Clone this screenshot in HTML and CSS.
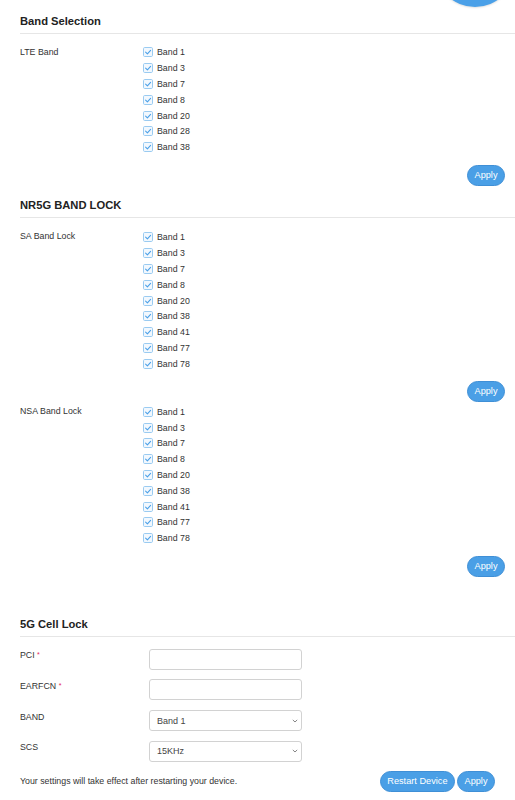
FILE: index.html
```html
<!DOCTYPE html>
<html lang="en">
<head>
<meta charset="utf-8">
<title>Band Selection</title>
<link rel="stylesheet" href="styles.css">
</head>
<body>
<div class="fab"></div>
<main class="page">
  <section class="sec sec-lte">
    <h2 class="title">Band Selection</h2>
    <div class="group g-lte">
      <div class="glabel">LTE Band</div>
      <ul class="bands">
        <li><span class="cb"><svg viewBox="0 0 10 10"><rect x="0.5" y="0.5" width="9" height="9" rx="1.2"/><path d="M2.6 5.2 L4.4 6.9 L7.6 3.4"/></svg></span>Band 1</li>
        <li><span class="cb"><svg viewBox="0 0 10 10"><rect x="0.5" y="0.5" width="9" height="9" rx="1.2"/><path d="M2.6 5.2 L4.4 6.9 L7.6 3.4"/></svg></span>Band 3</li>
        <li><span class="cb"><svg viewBox="0 0 10 10"><rect x="0.5" y="0.5" width="9" height="9" rx="1.2"/><path d="M2.6 5.2 L4.4 6.9 L7.6 3.4"/></svg></span>Band 7</li>
        <li><span class="cb"><svg viewBox="0 0 10 10"><rect x="0.5" y="0.5" width="9" height="9" rx="1.2"/><path d="M2.6 5.2 L4.4 6.9 L7.6 3.4"/></svg></span>Band 8</li>
        <li><span class="cb"><svg viewBox="0 0 10 10"><rect x="0.5" y="0.5" width="9" height="9" rx="1.2"/><path d="M2.6 5.2 L4.4 6.9 L7.6 3.4"/></svg></span>Band 20</li>
        <li><span class="cb"><svg viewBox="0 0 10 10"><rect x="0.5" y="0.5" width="9" height="9" rx="1.2"/><path d="M2.6 5.2 L4.4 6.9 L7.6 3.4"/></svg></span>Band 28</li>
        <li><span class="cb"><svg viewBox="0 0 10 10"><rect x="0.5" y="0.5" width="9" height="9" rx="1.2"/><path d="M2.6 5.2 L4.4 6.9 L7.6 3.4"/></svg></span>Band 38</li>
      </ul>
    </div>
    <div class="actions a1"><button class="btn">Apply</button></div>
  </section>

  <section class="sec sec-nr">
    <h2 class="title">NR5G BAND LOCK</h2>
    <div class="group g-sa">
      <div class="glabel">SA Band Lock</div>
      <ul class="bands">
        <li><span class="cb"><svg viewBox="0 0 10 10"><rect x="0.5" y="0.5" width="9" height="9" rx="1.2"/><path d="M2.6 5.2 L4.4 6.9 L7.6 3.4"/></svg></span>Band 1</li>
        <li><span class="cb"><svg viewBox="0 0 10 10"><rect x="0.5" y="0.5" width="9" height="9" rx="1.2"/><path d="M2.6 5.2 L4.4 6.9 L7.6 3.4"/></svg></span>Band 3</li>
        <li><span class="cb"><svg viewBox="0 0 10 10"><rect x="0.5" y="0.5" width="9" height="9" rx="1.2"/><path d="M2.6 5.2 L4.4 6.9 L7.6 3.4"/></svg></span>Band 7</li>
        <li><span class="cb"><svg viewBox="0 0 10 10"><rect x="0.5" y="0.5" width="9" height="9" rx="1.2"/><path d="M2.6 5.2 L4.4 6.9 L7.6 3.4"/></svg></span>Band 8</li>
        <li><span class="cb"><svg viewBox="0 0 10 10"><rect x="0.5" y="0.5" width="9" height="9" rx="1.2"/><path d="M2.6 5.2 L4.4 6.9 L7.6 3.4"/></svg></span>Band 20</li>
        <li><span class="cb"><svg viewBox="0 0 10 10"><rect x="0.5" y="0.5" width="9" height="9" rx="1.2"/><path d="M2.6 5.2 L4.4 6.9 L7.6 3.4"/></svg></span>Band 38</li>
        <li><span class="cb"><svg viewBox="0 0 10 10"><rect x="0.5" y="0.5" width="9" height="9" rx="1.2"/><path d="M2.6 5.2 L4.4 6.9 L7.6 3.4"/></svg></span>Band 41</li>
        <li><span class="cb"><svg viewBox="0 0 10 10"><rect x="0.5" y="0.5" width="9" height="9" rx="1.2"/><path d="M2.6 5.2 L4.4 6.9 L7.6 3.4"/></svg></span>Band 77</li>
        <li><span class="cb"><svg viewBox="0 0 10 10"><rect x="0.5" y="0.5" width="9" height="9" rx="1.2"/><path d="M2.6 5.2 L4.4 6.9 L7.6 3.4"/></svg></span>Band 78</li>
      </ul>
    </div>
    <div class="actions a2"><button class="btn">Apply</button></div>
    <div class="group g-nsa">
      <div class="glabel">NSA Band Lock</div>
      <ul class="bands">
        <li><span class="cb"><svg viewBox="0 0 10 10"><rect x="0.5" y="0.5" width="9" height="9" rx="1.2"/><path d="M2.6 5.2 L4.4 6.9 L7.6 3.4"/></svg></span>Band 1</li>
        <li><span class="cb"><svg viewBox="0 0 10 10"><rect x="0.5" y="0.5" width="9" height="9" rx="1.2"/><path d="M2.6 5.2 L4.4 6.9 L7.6 3.4"/></svg></span>Band 3</li>
        <li><span class="cb"><svg viewBox="0 0 10 10"><rect x="0.5" y="0.5" width="9" height="9" rx="1.2"/><path d="M2.6 5.2 L4.4 6.9 L7.6 3.4"/></svg></span>Band 7</li>
        <li><span class="cb"><svg viewBox="0 0 10 10"><rect x="0.5" y="0.5" width="9" height="9" rx="1.2"/><path d="M2.6 5.2 L4.4 6.9 L7.6 3.4"/></svg></span>Band 8</li>
        <li><span class="cb"><svg viewBox="0 0 10 10"><rect x="0.5" y="0.5" width="9" height="9" rx="1.2"/><path d="M2.6 5.2 L4.4 6.9 L7.6 3.4"/></svg></span>Band 20</li>
        <li><span class="cb"><svg viewBox="0 0 10 10"><rect x="0.5" y="0.5" width="9" height="9" rx="1.2"/><path d="M2.6 5.2 L4.4 6.9 L7.6 3.4"/></svg></span>Band 38</li>
        <li><span class="cb"><svg viewBox="0 0 10 10"><rect x="0.5" y="0.5" width="9" height="9" rx="1.2"/><path d="M2.6 5.2 L4.4 6.9 L7.6 3.4"/></svg></span>Band 41</li>
        <li><span class="cb"><svg viewBox="0 0 10 10"><rect x="0.5" y="0.5" width="9" height="9" rx="1.2"/><path d="M2.6 5.2 L4.4 6.9 L7.6 3.4"/></svg></span>Band 77</li>
        <li><span class="cb"><svg viewBox="0 0 10 10"><rect x="0.5" y="0.5" width="9" height="9" rx="1.2"/><path d="M2.6 5.2 L4.4 6.9 L7.6 3.4"/></svg></span>Band 78</li>
      </ul>
    </div>
    <div class="actions a3"><button class="btn">Apply</button></div>
  </section>

  <section class="sec sec-cell">
    <h2 class="title">5G Cell Lock</h2>
    <div class="form">
      <div class="frow">
        <label class="flabel">PCI <span class="req">*</span></label>
        <input class="field" type="text">
      </div>
      <div class="frow">
        <label class="flabel">EARFCN <span class="req">*</span></label>
        <input class="field" type="text">
      </div>
      <div class="frow">
        <label class="flabel">BAND</label>
        <div class="selwrap">
          <select class="field sel"><option>Band 1</option></select>
          <svg class="chev" viewBox="0 0 6 4"><path d="M0.8 0.9 L3 3 L5.2 0.9"/></svg>
        </div>
      </div>
      <div class="frow">
        <label class="flabel">SCS</label>
        <div class="selwrap">
          <select class="field sel"><option>15KHz</option></select>
          <svg class="chev" viewBox="0 0 6 4"><path d="M0.8 0.9 L3 3 L5.2 0.9"/></svg>
        </div>
      </div>
    </div>
    <div class="footer">
      <p class="note">Your settings will take effect after restarting your device.</p>
      <div class="btns">
        <button class="btn btn-restart">Restart Device</button>
        <button class="btn">Apply</button>
      </div>
    </div>
  </section>
</main>
</body>
</html>
```

FILE: styles.css
```css
* { box-sizing: border-box; }

html, body {
  margin: 0;
  padding: 0;
  background: #ffffff;
}

body {
  font-family: "Liberation Sans", Arial, Helvetica, sans-serif;
  font-size: 8.8px;
  color: #333333;
  position: relative;
  overflow: hidden;
  height: 800px;
}

.fab {
  position: absolute;
  left: 435px;
  top: -73px;
  width: 80px;
  height: 80px;
  border-radius: 50%;
  background: #4aa0e8;
  box-shadow: 0 1px 2px rgba(0, 0, 0, 0.12);
}

.page {
  display: flex;
  flex-direction: column;
}

.title {
  margin: 0 0 0 20px;
  font-size: 11.2px;
  line-height: 14px;
  font-weight: bold;
  color: #222222;
  padding-bottom: 5px;
  border-bottom: 1px solid #e6e6e6;
}

.sec-lte .title { margin-top: 14px; }
.sec-nr .title { margin-top: 12px; }
.sec-cell .title { margin-top: 39.5px; }

.group {
  display: grid;
  grid-template-columns: 122.5px 1fr;
  padding-left: 20px;
}

.g-lte { margin-top: 10.6px; }
.g-sa { margin-top: 11px; }
.g-nsa { margin-top: 1.6px; }

.glabel {
  line-height: 15.8px;
}

.bands {
  list-style: none;
  margin: 0;
  padding: 0;
}

.bands li {
  display: flex;
  align-items: center;
  height: 15.8px;
  gap: 4.5px;
}

.cb {
  display: flex;
  width: 10px;
  height: 10px;
}

.cb svg {
  width: 10px;
  height: 10px;
}

.cb rect {
  fill: #f2f8fe;
  stroke: #9acbf1;
  stroke-width: 1;
}

.cb path {
  fill: none;
  stroke: #4aa0e8;
  stroke-width: 1.1;
  stroke-linecap: round;
  stroke-linejoin: round;
}

.actions {
  display: flex;
  justify-content: flex-end;
  padding-right: 10px;
}

.a1 { margin-top: 10.3px; }
.a2 { margin-top: 9.7px; }
.a3 { margin-top: 10.2px; }

.btn {
  font-family: "Liberation Sans", Arial, Helvetica, sans-serif;
  font-size: 9.2px;
  color: #ffffff;
  background: #4a9fe6;
  border: 1px solid #3f8fd6;
  border-radius: 11px;
  height: 21px;
  padding: 0 6.5px;
  line-height: 19px;
  cursor: pointer;
}

.form {
  display: flex;
  flex-direction: column;
  gap: 9.67px;
  margin-top: 12px;
  padding-left: 20px;
}

.frow {
  display: grid;
  grid-template-columns: 129px 153px;
  align-items: start;
}

.flabel {
  line-height: 12px;
  padding-top: 0.5px;
}

.req {
  color: #e3245a;
  font-size: 7px;
  vertical-align: top;
}

.field {
  width: 153px;
  height: 21px;
  border: 1px solid #d2d2d2;
  border-radius: 3px;
  background: #ffffff;
  font-family: "Liberation Sans", Arial, Helvetica, sans-serif;
  font-size: 9px;
  color: #444444;
  padding: 0 7px;
  margin: 0;
  outline: none;
}

.selwrap {
  position: relative;
  width: 153px;
  height: 21px;
}

.sel {
  -webkit-appearance: none;
  appearance: none;
  display: block;
}

.chev {
  position: absolute;
  right: 4px;
  top: 8.5px;
  width: 6px;
  height: 4px;
  pointer-events: none;
}

.chev path {
  fill: none;
  stroke: #777777;
  stroke-width: 0.9;
}

.footer {
  display: flex;
  align-items: center;
  justify-content: space-between;
  margin-top: 9px;
  padding: 0 20px;
}

.note {
  margin: 0;
}

.btns {
  display: flex;
  gap: 2px;
}
```
